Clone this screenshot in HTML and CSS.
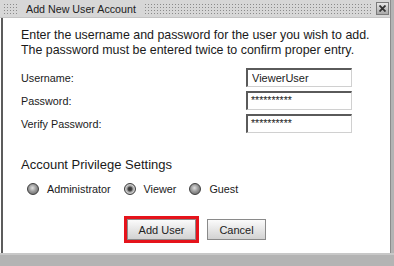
FILE: index.html
```html
<!DOCTYPE html>
<html lang="en">
<head>
    <meta charset="UTF-8">
    <title>Add New User Account</title>
    <link rel="stylesheet" href="styles.css">
</head>
<body>
    <div class="dialog">
        <div class="dialog-title">
            <span class="dots dots-left"></span>
            <span class="title-text">Add New User Account</span>
            <span class="dots dots-right"></span>
            <button class="close-btn" aria-label="Close">
                <svg width="7" height="7" viewBox="0 0 7 7">
                    <path d="M0.5 0.5 L6.5 6.5 M6.5 0.5 L0.5 6.5" stroke="#333" stroke-width="1.8"/>
                </svg>
            </button>
        </div>

        <div class="dialog-body">
            <p class="intro">Enter the username and password for the user you wish to add.<br>The password must be entered twice to confirm proper entry.</p>

            <div class="form-grid">
                <label for="username">Username:</label>
                <input class="text-input" type="text" id="username" value="ViewerUser">
                <label for="password">Password:</label>
                <div class="text-input pw">**********</div>
                <label for="verify">Verify Password:</label>
                <div class="text-input pw">**********</div>
            </div>

            <h2 class="section-title">Account Privilege Settings</h2>
            <div class="radio-row">
                <label class="radio"><span class="radio-dot"></span>Administrator</label>
                <label class="radio"><span class="radio-dot checked"></span>Viewer</label>
                <label class="radio"><span class="radio-dot"></span>Guest</label>
            </div>

            <div class="button-row">
                <button class="dlg-btn primary">Add User</button>
                <button class="dlg-btn">Cancel</button>
            </div>
        </div>
    </div>
    <div class="footer-band"></div>
</body>
</html>
```

FILE: styles.css
```css
* {
    margin: 0;
    padding: 0;
    box-sizing: border-box;
    font-family: 'Liberation Sans', Arial, sans-serif;
}

body {
    background-color: #b4b4b4;
    width: 394px;
    height: 266px;
    overflow: hidden;
}

.dialog {
    width: 391px;
    height: 253px;
    background-color: white;
    border-right: 1px solid #8c8c8c;
    display: flex;
    flex-direction: column;
}

.dialog-title {
    height: 18px;
    background-color: #d7d7d7;
    border-bottom: 1px solid #c4c4c4;
    display: flex;
    align-items: center;
    padding-left: 3px;
    padding-right: 1px;
}

.dots {
    height: 11px;
    background-image: radial-gradient(circle, #8a8a8a 0.8px, transparent 0.9px);
    background-size: 3px 3px;
    background-position: 0 0;
}

.dots-left {
    width: 16px;
}

.dots-right {
    flex: 1;
    margin-right: 3px;
}

.title-text {
    font-size: 10.7px;
    color: #222;
    padding: 0 8px 0 7px;
}

.close-btn {
    width: 13px;
    height: 13px;
    border: 1px solid #7a7a7a;
    background: linear-gradient(#e6e6e6, #a9a9a9);
    display: flex;
    align-items: center;
    justify-content: center;
}

.dialog-body {
    flex: 1;
    margin-left: 1px;
    border-left: 2px solid #5c5c5c;
    padding: 10px 0 0 18px;
    color: #1a1a1a;
}

.intro {
    font-size: 12.4px;
    line-height: 14.5px;
}

.form-grid {
    display: grid;
    grid-template-columns: 225px 106px;
    row-gap: 4px;
    align-items: center;
    margin-top: 11px;
}

.form-grid label {
    font-size: 10.8px;
}

.text-input {
    height: 19px;
    width: 106px;
    border: 1px solid #d0d0d0;
    border-top: 2px solid #5a5a5a;
    border-left: 2px solid #5a5a5a;
    font-size: 11px;
    padding: 0 4px;
    color: #222;
    outline: none;
    background: white;
}

.text-input.pw {
    font-size: 10.5px;
    line-height: 15px;
    padding-left: 3px;
}

.section-title {
    font-size: 13px;
    font-weight: normal;
    line-height: 16px;
    margin-top: 24px;
}

.radio-row {
    display: flex;
    align-items: center;
    margin-top: 10px;
    padding-left: 6px;
}

.radio {
    display: flex;
    align-items: center;
    font-size: 10.8px;
    margin-right: 13px;
}

.radio-dot {
    width: 12px;
    height: 12px;
    border-radius: 50%;
    border: 1px solid #3e3e3e;
    background: radial-gradient(circle at 45% 40%, #e0e0e0 0, #9a9a9a 45%, #5a5a5a 100%);
    margin-right: 8px;
}

.radio-dot.checked {
    background: radial-gradient(circle at 50% 50%, #2e2e2e 0, #4a4a4a 28%, #9a9a9a 42%, #cfcfcf 62%, #7a7a7a 100%);
}

.button-row {
    display: flex;
    justify-content: center;
    align-items: center;
    gap: 11px;
    margin-top: 24px;
    margin-left: -18px;
}

.dlg-btn {
    height: 21px;
    border: 1px solid #8a8a8a;
    background: linear-gradient(#fbfbfb, #e2e2e2 60%, #d2d2d2);
    font-size: 11px;
    color: #222;
    padding: 0 10px;
}

.dlg-btn.primary {
    width: 69px;
    outline: 3px solid #e5131b;
    outline-offset: 0;
}

.dlg-btn:not(.primary) {
    width: 59px;
}

.footer-band {
    height: 13px;
    border-top: 2px solid #c8c8c8;
}
```
